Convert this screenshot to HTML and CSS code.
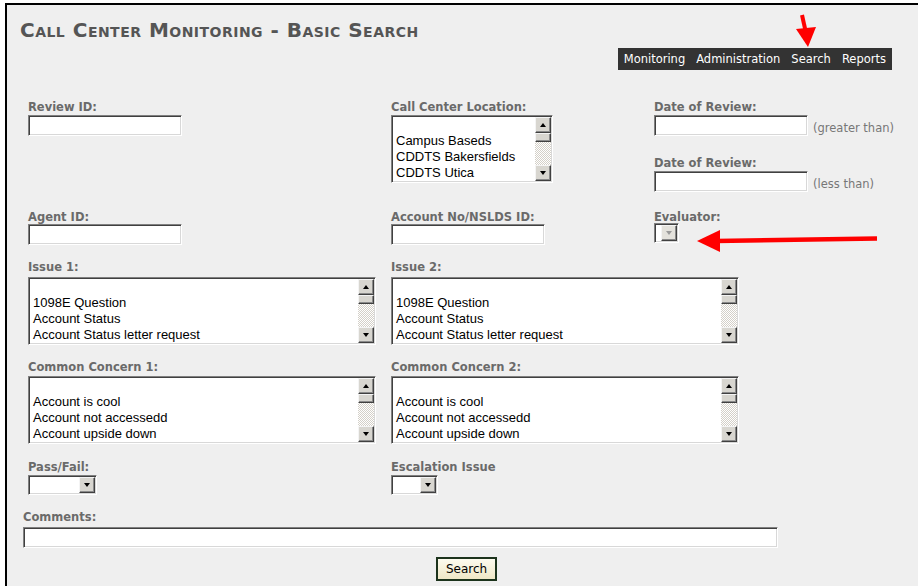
FILE: index.html
```html
<!DOCTYPE html>
<html>
<head>
<meta charset="utf-8">
<title>Call Center Monitoring - Basic Search</title>
<link rel="stylesheet" href="styles.css">
</head>
<body>
<div class="frame">
  <h1 class="title">Call Center Monitoring - Basic Search</h1>
  <div class="navwrap">
    <nav class="nav"><a>Monitoring</a><a>Administration</a><a>Search</a><a>Reports</a></nav>
  </div>
  <form class="form">
    <div class="row row-a">
      <div class="cell">
        <div class="lbl mb1">Review ID:</div>
        <input class="txt w154" type="text">
      </div>
      <div class="cell">
        <div class="lbl mb1">Call Center Location:</div>
        <div class="listbox lb-small">
          <div class="items">
            <div class="it">&nbsp;</div>
            <div class="it">Campus Baseds</div>
            <div class="it">CDDTS Bakersfields</div>
            <div class="it">CDDTS Utica</div>
          </div>
          <div class="sb"><div class="sbb up"></div><div class="sbt"></div><div class="sbk"></div><div class="sbb dn"></div></div>
        </div>
      </div>
      <div class="cell">
        <div class="lbl mb1">Date of Review:</div>
        <div class="inline"><input class="txt w154" type="text"><span class="note">(greater than)</span></div>
        <div class="lbl mb1 second">Date of Review:</div>
        <div class="inline"><input class="txt w154" type="text"><span class="note">(less than)</span></div>
      </div>
    </div>

    <div class="row row-b">
      <div class="cell">
        <div class="lbl mb0">Agent ID:</div>
        <input class="txt w154" type="text">
      </div>
      <div class="cell">
        <div class="lbl mb0">Account No/NSLDS ID:</div>
        <input class="txt w154" type="text">
      </div>
      <div class="cell">
        <div class="lbl mb0">Evaluator:</div>
        <div class="sel sel-eval"><div class="selv"></div><div class="selb dis"></div></div>
      </div>
    </div>

    <div class="row row-c">
      <div class="cell">
        <div class="lbl mb3">Issue 1:</div>
        <div class="listbox lb-wide">
          <div class="items">
            <div class="it">&nbsp;</div>
            <div class="it">1098E Question</div>
            <div class="it">Account Status</div>
            <div class="it">Account Status letter request</div>
          </div>
          <div class="sb"><div class="sbb up"></div><div class="sbt"></div><div class="sbk"></div><div class="sbb dn"></div></div>
        </div>
      </div>
      <div class="cell span2">
        <div class="lbl mb3">Issue 2:</div>
        <div class="listbox lb-wide">
          <div class="items">
            <div class="it">&nbsp;</div>
            <div class="it">1098E Question</div>
            <div class="it">Account Status</div>
            <div class="it">Account Status letter request</div>
          </div>
          <div class="sb"><div class="sbb up"></div><div class="sbt"></div><div class="sbk"></div><div class="sbb dn"></div></div>
        </div>
      </div>
    </div>

    <div class="row row-d">
      <div class="cell">
        <div class="lbl mb2">Common Concern 1:</div>
        <div class="listbox lb-wide">
          <div class="items">
            <div class="it">&nbsp;</div>
            <div class="it">Account is cool</div>
            <div class="it">Account not accessedd</div>
            <div class="it">Account upside down</div>
          </div>
          <div class="sb"><div class="sbb up"></div><div class="sbt"></div><div class="sbk"></div><div class="sbb dn"></div></div>
        </div>
      </div>
      <div class="cell span2">
        <div class="lbl mb2">Common Concern 2:</div>
        <div class="listbox lb-wide">
          <div class="items">
            <div class="it">&nbsp;</div>
            <div class="it">Account is cool</div>
            <div class="it">Account not accessedd</div>
            <div class="it">Account upside down</div>
          </div>
          <div class="sb"><div class="sbb up"></div><div class="sbt"></div><div class="sbk"></div><div class="sbb dn"></div></div>
        </div>
      </div>
    </div>

    <div class="row row-e">
      <div class="cell">
        <div class="lbl mb1">Pass/Fail:</div>
        <div class="sel sel-pf"><div class="selv"></div><div class="selb"></div></div>
      </div>
      <div class="cell span2">
        <div class="lbl mb1">Escalation Issue</div>
        <div class="sel sel-esc"><div class="selv"></div><div class="selb"></div></div>
      </div>
    </div>

    <div class="comments">
      <div class="lbl mb3">Comments:</div>
      <input class="txt wcom" type="text">
    </div>

    <div class="actions">
      <button type="button" class="btn">Search</button>
    </div>
  </form>
</div>

<svg class="marks" width="918" height="588" viewBox="0 0 918 588" aria-hidden="true">
  <line x1="802" y1="15" x2="806" y2="33" stroke="#ff0000" stroke-width="4"/>
  <polygon points="796,29 816,27 808,47" fill="#ff0000"/>
  <line x1="877" y1="238.5" x2="716" y2="241" stroke="#ff0000" stroke-width="4.5"/>
  <polygon points="697,241 720,230 720,252" fill="#ff0000"/>
</svg>
</body>
</html>
```

FILE: styles.css
```css
html, body {
  margin: 0;
  padding: 0;
  background: #ffffff;
  overflow: hidden;
}

body {
  width: 918px;
  height: 588px;
  position: relative;
  font-family: "DejaVu Sans", Verdana, sans-serif;
}

.frame {
  margin: 3px 0 0 5px;
  border-top: 2px solid #000;
  border-left: 2px solid #000;
  background: #efefef;
  height: 583px;
  box-sizing: border-box;
}

.title {
  margin: 13px 0 0 0;
  padding-left: 13px;
  font-size: 20px;
  line-height: 24px;
  font-weight: bold;
  font-variant: small-caps;
  color: #555555;
  letter-spacing: 0.48px;
}

.navwrap {
  display: flex;
  justify-content: flex-end;
  margin-top: 6px;
  padding-right: 26px;
}

.nav {
  display: flex;
  gap: 11px;
  background: #333333;
  padding: 0 6px;
  height: 22px;
  line-height: 22px;
  font-size: 11.5px;
}

.nav a {
  color: #ffffff;
  text-decoration: none;
}

.form {
  margin: 30px 0 0 0;
  padding-left: 21px;
}

.row {
  display: grid;
  grid-template-columns: 363px 263px 1fr;
  align-items: start;
}

.span2 {
  grid-column: 2 / 4;
}

.row-b { margin-top: 18px; }
.row-c { margin-top: 15px; }
.row-d { margin-top: 15px; }
.row-e { margin-top: 16px; }

.lbl {
  font-size: 11.5px;
  line-height: 14px;
  font-weight: bold;
  color: #6a6a6a;
  white-space: nowrap;
}

.mb0 { margin-bottom: 0; }
.mb1 { margin-bottom: 1px; }
.mb2 { margin-bottom: 2px; }
.mb3 { margin-bottom: 3px; }

.second { margin-top: 20px; }

.txt {
  display: block;
  box-sizing: border-box;
  height: 21px;
  margin: 0;
  padding: 0 2px;
  background: #ffffff;
  border: 1px solid;
  border-color: #808080 #ffffff #ffffff #808080;
  box-shadow: inset 1px 1px 0 #404040, inset -1px -1px 0 #d8d8d8;
  font-family: "Liberation Sans", Arial, sans-serif;
  font-size: 13px;
  outline: none;
}

.w154 { width: 154px; }
.wcom { width: 755px; }

.inline {
  display: flex;
  align-items: flex-end;
}

.note {
  margin-left: 5px;
  font-size: 11.5px;
  line-height: 16px;
  color: #777777;
  white-space: nowrap;
}

/* list boxes */
.listbox {
  display: flex;
  box-sizing: border-box;
  height: 68px;
  background: #ffffff;
  border: 1px solid;
  border-color: #808080 #ffffff #ffffff #808080;
  box-shadow: inset 1px 1px 0 #404040, inset -1px -1px 0 #d8d8d8;
  padding: 1px;
}

.lb-small { width: 162px; }
.lb-wide { width: 348px; }

.items {
  flex: 1;
  overflow: hidden;
  padding-left: 3px;
  font-family: "Liberation Sans", Arial, sans-serif;
  font-size: 13px;
  line-height: 16px;
  color: #000;
  white-space: nowrap;
}

.sb {
  width: 16px;
  display: flex;
  flex-direction: column;
}

.sbb, .sbt {
  box-sizing: border-box;
  background: #d8d6d0;
  border: 1px solid;
  border-color: #f4f4f4 #404040 #404040 #f4f4f4;
  box-shadow: inset -1px -1px 0 #8a8a8a;
}

.sbb {
  height: 16px;
  display: flex;
  align-items: center;
  justify-content: center;
}

.sbt { height: 9px; }

.sbk {
  flex: 1;
  background: repeating-conic-gradient(#d4d0c8 0 25%, #ffffff 0 50%) 0 0 / 2px 2px;
}

.up::after,
.dn::after,
.selb::after {
  content: "";
  width: 0;
  height: 0;
  border-left: 3.5px solid transparent;
  border-right: 3.5px solid transparent;
}

.up::after { border-bottom: 4px solid #000; }
.dn::after,
.selb::after { border-top: 4px solid #000; }

/* dropdowns */
.sel {
  display: flex;
  box-sizing: border-box;
  height: 20px;
  background: #ffffff;
  border: 1px solid;
  border-color: #808080 #ffffff #ffffff #808080;
  box-shadow: inset 1px 1px 0 #404040, inset -1px -1px 0 #d8d8d8;
  padding: 1px;
}

.selv { flex: 1; }

.selb {
  width: 16px;
  box-sizing: border-box;
  background: #d8d6d0;
  border: 1px solid;
  border-color: #f4f4f4 #404040 #404040 #f4f4f4;
  box-shadow: inset -1px -1px 0 #8a8a8a;
  display: flex;
  align-items: center;
  justify-content: center;
}

.selb.dis { background: #e4e2dc; }
.selb.dis::after { border-top-color: #9a9a9a; }

.sel-pf { width: 69px; }
.sel-esc { width: 47px; }
.sel-eval { width: 25px; margin-top: -1px; }

.comments {
  margin-top: 15px;
  margin-left: -5px;
}

.actions {
  margin-top: 9px;
  padding-left: 408px;
}

.btn {
  box-sizing: border-box;
  width: 61px;
  height: 24px;
  margin: 0;
  padding: 0;
  border: 2px solid #1c331c;
  background: linear-gradient(#fdfbef, #efe7c6);
  font-family: "DejaVu Sans", Verdana, sans-serif;
  font-size: 12px;
  color: #000;
  cursor: pointer;
}

.marks {
  position: absolute;
  left: 0;
  top: 0;
  pointer-events: none;
}
```
